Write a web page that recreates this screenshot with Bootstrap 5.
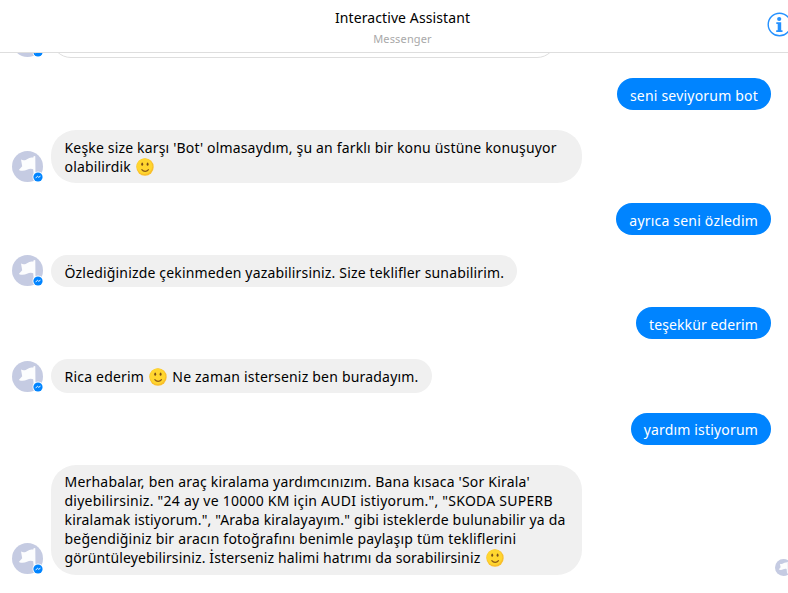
<!DOCTYPE html>
<html lang="tr">
<head>
<meta charset="utf-8">
<meta name="viewport" content="width=device-width, initial-scale=1">
<title>Interactive Assistant</title>
<link href="https://cdn.jsdelivr.net/npm/bootstrap@5.3.0/dist/css/bootstrap.min.css" rel="stylesheet">
<style>
  body { font: 14px/19px "Noto Sans", "Open Sans", sans-serif; letter-spacing: .17px; color: #000; height: 100vh; }
  .chat-head { height: 53px; border-bottom: 1px solid #dedede; padding-top: 8px; }
  .chat-title { line-height: 20px; letter-spacing: .1px; padding-left: 17px; }
  .chat-sub { font-size: 11px; line-height: 20px; color: #a9a9a9; letter-spacing: .15px; padding-left: 17px; margin-top: 1px; }
  .info-btn { top: 12px; left: 767px; }
  .thread { gap: 20px; padding: 0 17px 0 12px; }
  .cut-row { height: 5px; }
  .ghost { width: 506px; height: 60px; border: 1px solid #dedede; border-radius: 20px; }
  .msg { gap: 8px; }
  .avatar { width: 31px; height: 31px; margin-bottom: 1px; overflow: visible; }
  .bubble { background: #f0f0f0; padding: 7px 13px 6px 13.500px; border-radius: 25px; white-space: nowrap; }
  .bubble.wide { width: 531px; }
  .bubble.two { height: 53px; padding-top: 8px; }
  .bubble.five { height: 110px; }
  .bubble.one { border-radius: 17px; height: 32px; padding-top: 8px; }
  .bubble.tall { height: 34px; }
  .mine { background: #0084ff; color: #fff; height: 32px; padding: 8px 13px 5px; border-radius: 16px; }
  .mine.up { padding-top: 7px; }
  .line { display: block; height: 19px; }
  .emo { width: 18px; height: 18px; vertical-align: -4px; margin: 0 1px 0 1.500px; }
  .t1 { letter-spacing: .1px; } .t14 { letter-spacing: .125px; } .t2 { letter-spacing: .2px; } .t27 { letter-spacing: .25px; }
  .seen { width: 17px; height: 17px; left: 775px; top: 559px; }
</style>
</head>
<body class="bg-white overflow-hidden position-relative">
<svg class="d-none">
  <symbol id="flag" viewBox="0 0 31 31">
    <circle cx="15.500" cy="15.500" r="15.500" fill="#c5cbe2"/>
    <path d="M9 8.600C14.500 11.400 15.500 5.200 21.300 6.600L21.800 4.900L23.300 5.300L23.500 26.500H22L21.200 18.200C16.500 15.800 13.500 22 6.800 19L10.200 15.200Z" fill="#fff" fill-opacity=".95"/>
  </symbol>
  <symbol id="face" viewBox="0 0 31 31" overflow="visible">
    <use href="#flag" width="31" height="31"/>
    <circle cx="26" cy="26" r="5.500" fill="#fff"/>
    <circle cx="26" cy="26" r="4.600" fill="#0084ff"/>
    <path d="M23.600 27.200l1.900-2 1.200 1.100 1.800-1.200" fill="none" stroke="#fff" stroke-width=".9"/>
  </symbol>
  <symbol id="smile" viewBox="0 0 18 18">
    <circle cx="9" cy="9" r="8.700" fill="#f9bf2b"/>
    <circle cx="8.500" cy="8.200" r="7.800" fill="#ffd62f"/>
    <ellipse cx="6.200" cy="6.200" rx=".95" ry="1.600" fill="#7a4e17"/>
    <ellipse cx="11.600" cy="6.200" rx=".95" ry="1.600" fill="#7a4e17"/>
    <path d="M5.800 11.700c1.700 2.300 5 2.300 6.700 0" fill="none" stroke="#8d5a17" stroke-width="1.200" stroke-linecap="round"/>
  </symbol>
</svg>

<header class="chat-head text-center">
  <div class="chat-title">Interactive Assistant</div>
  <div class="chat-sub">Messenger</div>
  <svg class="info-btn position-absolute" width="26" height="26" viewBox="0 0 26 26">
    <circle cx="12.500" cy="12.500" r="11.300" fill="none" stroke="#2591ff" stroke-width="1.400"/>
    <circle cx="12.200" cy="7" r="2.100" fill="#2591ff"/>
    <path d="M9.300 10.300h4.900v8h1.300v1.600H9.200v-1.600h1.500v-6.400H9.300z" fill="#2591ff"/>
  </svg>
</header>

<main class="thread d-flex flex-column">
  <div class="cut-row msg d-flex align-items-end overflow-hidden flex-shrink-0">
    <svg class="avatar flex-shrink-0"><use href="#face"/></svg>
    <div class="ghost flex-shrink-0"></div>
  </div>
  <div class="d-flex justify-content-end"><div class="mine t2">seni seviyorum bot</div></div>
  <div class="msg d-flex align-items-end">
    <svg class="avatar"><use href="#face"/></svg>
    <div class="bubble wide two"><span class="line">Keşke size karşı 'Bot' olmasaydım, şu an farklı bir konu üstüne konuşuyor</span><span class="line">olabilirdik <svg class="emo"><use href="#smile"/></svg></span></div>
  </div>
  <div class="d-flex justify-content-end"><div class="mine t2">ayrıca seni özledim</div></div>
  <div class="msg d-flex align-items-end">
    <svg class="avatar"><use href="#face"/></svg>
    <div class="bubble one">Özlediğinizde çekinmeden yazabilirsiniz. Size teklifler sunabilirim.</div>
  </div>
  <div class="d-flex justify-content-end"><div class="mine t1">teşekkür ederim</div></div>
  <div class="msg d-flex align-items-end">
    <svg class="avatar"><use href="#face"/></svg>
    <div class="bubble one tall t2">Rica ederim <svg class="emo"><use href="#smile"/></svg> Ne zaman isterseniz ben buradayım.</div>
  </div>
  <div class="d-flex justify-content-end"><div class="mine up">yardım istiyorum</div></div>
  <div class="msg d-flex align-items-end">
    <svg class="avatar"><use href="#face"/></svg>
    <div class="bubble wide five"><span class="line t2">Merhabalar, ben araç kiralama yardımcınızım. Bana kısaca 'Sor Kirala'</span><span class="line t27">diyebilirsiniz. "24 ay ve 10000 KM için AUDI istiyorum.", "SKODA SUPERB</span><span class="line">kiralamak istiyorum.", "Araba kiralayayım." gibi isteklerde bulunabilir ya da</span><span class="line t2">beğendiğiniz bir aracın fotoğrafını benimle paylaşıp tüm tekliflerini</span><span class="line t14">görüntüleyebilirsiniz. İsterseniz halimi hatrımı da sorabilirsiniz <svg class="emo"><use href="#smile"/></svg></span></div>
  </div>
</main>
<svg class="seen position-absolute"><use href="#flag"/></svg>
<script src="https://cdn.jsdelivr.net/npm/bootstrap@5.3.0/dist/js/bootstrap.bundle.min.js"></script>
</body>
</html>
